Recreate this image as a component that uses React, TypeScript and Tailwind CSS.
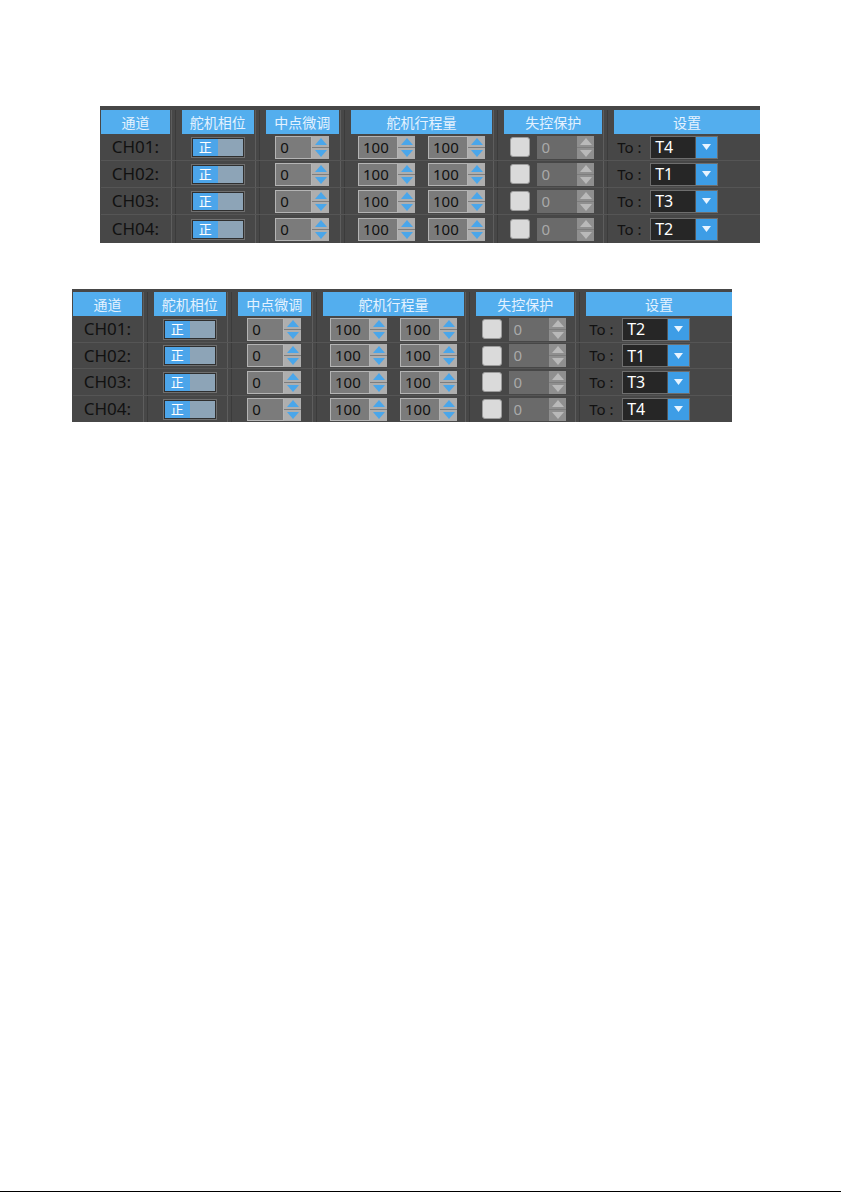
import React from "react";

const font = "font-['Noto_Sans','Noto_Sans_CJK_SC',sans-serif]";

const Up = ({ c }: { c: string }) => (
  <svg width="12" height="7" viewBox="0 0 12 7">
    <polygon points="6,0 12,7 0,7" fill={c} />
  </svg>
);

const Down = ({ c }: { c: string }) => (
  <svg width="12" height="7" viewBox="0 0 12 7">
    <polygon points="0,0 12,0 6,7" fill={c} />
  </svg>
);

const Spinner = ({ value, w, disabled }: { value: string; w: number; disabled?: boolean }) => (
  <div className="flex h-[23px]">
    <div
      className={
        disabled
          ? "h-full flex items-center pl-[4px] text-[15px] bg-[#6a6a6a] text-[#a9a9a9]"
          : "h-full flex items-center pl-[4px] text-[15px] bg-[#7b7b7b] border border-[#b4b4b4] text-[#111111]"
      }
      style={{ width: w }}
    >
      {value}
    </div>
    <div className={disabled ? "w-[17px] h-full flex flex-col bg-[#8f8f8f]" : "w-[17px] h-full flex flex-col bg-[#aeaeae]"}>
      <div className="flex-1 flex items-center justify-center border-b border-[#7d7d7d]">
        <Up c={disabled ? "#b9b9b9" : "#4aa6ea"} />
      </div>
      <div className="flex-1 flex items-center justify-center">
        <Down c={disabled ? "#b9b9b9" : "#4aa6ea"} />
      </div>
    </div>
  </div>
);

const Toggle = () => (
  <div className="w-[54px] h-[21px] flex border border-[#6f6f6f] bg-[#2f2f2f] p-[1px]">
    <div className="w-[25px] h-full bg-[#4ca5ea] text-white text-[13px] flex items-center justify-center leading-none">正</div>
    <div className="flex-1 h-full bg-[#8da4b7]" />
  </div>
);

const Select = ({ value }: { value: string }) => (
  <div className="w-[68px] h-[23px] flex border border-[#6e6e6e] bg-[#262626]">
    <div className="flex-1 flex items-center pl-[4px] text-white text-[16px]">{value}</div>
    <div className="w-[22px] h-full bg-[#3d9de6] flex items-center justify-center border-l border-[#555]">
      <svg width="9" height="6" viewBox="0 0 9 6">
        <polygon points="0,0 9,0 4.5,6" fill="#e8f4ff" />
      </svg>
    </div>
  </div>
);

const Sep = () => (
  <div className="w-[12px] self-stretch flex">
    <div className="ml-[1px] w-[1px] bg-[#5d5d5d]" />
    <div className="ml-[3px] w-[1px] bg-[#3b3b3b]" />
  </div>
);

const widths = [69, 72, 73, 142, 98, 146];
const titles = ["通道", "舵机相位", "中点微调", "舵机行程量", "失控保护", "设置"];

const Panel = ({ selects, rowH, pt }: { selects: string[]; rowH: number[]; pt: number }) => {
  const cells = (i: number) => [
    <div key="a" className="w-full h-full flex items-center justify-center text-[17px] text-[#111111]">
      CH0{i + 1}:
    </div>,
    <div key="b" className="w-full h-full flex items-center justify-center">
      <Toggle />
    </div>,
    <div key="c" className="w-full h-full flex items-center justify-center">
      <Spinner value="0" w={37} />
    </div>,
    <div key="d" className="w-full h-full flex items-center justify-center gap-[13px]">
      <Spinner value="100" w={40} />
      <Spinner value="100" w={40} />
    </div>,
    <div key="e" className="w-full h-full flex items-center pl-[6px] gap-[7px]">
      <div className="w-[20px] h-[20px] rounded-[3px] bg-[#dadada] border border-[#9c9c9c]" />
      <Spinner value="0" w={40} disabled />
    </div>,
    <div key="f" className="w-full h-full flex items-center pl-[3px] gap-[7px]">
      <span className="text-[15px] text-[#111111] w-[26px]">To :</span>
      <Select value={selects[i]} />
    </div>,
  ];

  return (
    <div className={`w-[660px] bg-[#474747] pl-[1px] ${font}`}>
      <div className="flex" style={{ paddingTop: pt }}>
        {widths.map((w, j) => (
          <React.Fragment key={j}>
            {j > 0 && <Sep />}
            <div
              className="h-[24px] bg-[#53aeee] text-[#e4f2ff] text-[14px] flex items-center justify-center"
              style={{ width: w }}
            >
              {titles[j]}
            </div>
          </React.Fragment>
        ))}
      </div>
      {[0, 1, 2, 3].map((i) => (
        <div
          key={i}
          className={i < 3 ? "flex border-b border-[#555555]" : "flex"}
          style={{ height: rowH[i] }}
        >
          {cells(i).map((c, j) => (
            <React.Fragment key={j}>
              {j > 0 && <Sep />}
              <div style={{ width: widths[j] }}>{c}</div>
            </React.Fragment>
          ))}
        </div>
      ))}
    </div>
  );
};

export default function App() {
  return (
    <div className="w-[841px] h-[1192px] bg-white flex flex-col">
      <div className="pt-[106px] pl-[100px]">
        <Panel selects={["T4", "T1", "T3", "T2"]} rowH={[27, 27, 27, 28]} pt={4} />
      </div>
      <div className="pt-[46px] pl-[72px]">
        <Panel selects={["T2", "T1", "T3", "T4"]} rowH={[27, 26, 27, 26]} pt={3} />
      </div>
      <div className="mt-auto h-[1px] bg-black" />
    </div>
  );
}
